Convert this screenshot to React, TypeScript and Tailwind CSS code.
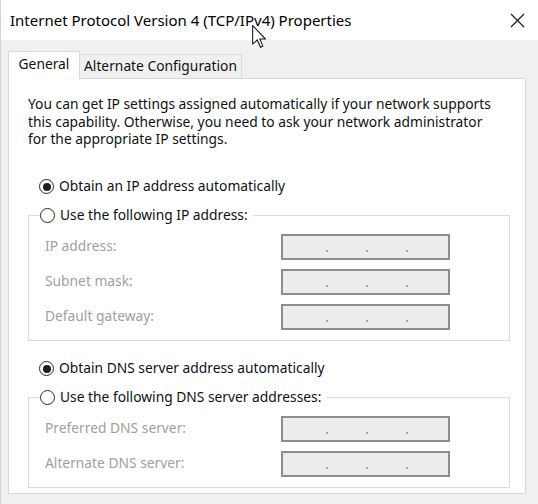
import React from "react";

const Radio = ({ checked }: { checked?: boolean }) => (
  <span className="w-[15px] h-[15px] rounded-full border border-[#2a2a2a] bg-white flex items-center justify-center shrink-0">
    {checked && <span className="w-[8px] h-[8px] rounded-full bg-[#1e1e1e]" />}
  </span>
);

const IpBox = () => (
  <div className="w-[169px] h-[26px] border-2 border-[#8d8d8d] bg-[#ececec] flex items-end pb-[6px] pl-[43px] gap-[38px]">
    <span className="w-[2px] h-[2px] rounded-full bg-[#8c8c8c]" />
    <span className="w-[2px] h-[2px] rounded-full bg-[#8c8c8c]" />
    <span className="w-[2px] h-[2px] rounded-full bg-[#8c8c8c]" />
  </div>
);

const Row = ({ label }: { label: string }) => (
  <div className="flex items-center h-[26px]">
    <span className="w-[236px] text-[#a0a0a0]">{label}</span>
    <IpBox />
  </div>
);

const Group = ({ title, labels }: { title: string; labels: string[] }) => (
  <fieldset className="w-[482px] border border-[#dcdcdc] pb-[10px]">
    <legend className="ml-[11px] pr-[5px] h-[20px] flex items-center gap-[5px]">
      <Radio />
      <span>{title}</span>
    </legend>
    <div className="flex flex-col gap-[9px] mt-[8px] pl-[16px]">
      {labels.map((l) => (
        <Row key={l} label={l} />
      ))}
    </div>
  </fieldset>
);

export default function App() {
  return (
    <div className="relative w-[538px] h-[504px] overflow-hidden bg-[#f0f0f0] text-[13.8px] text-[#111111] font-['Noto_Sans',sans-serif] border-l border-[#d4d4d4]">
      <div className="h-[40px] bg-white flex items-center justify-between pl-[9px] pr-[13px]">
        <span className="text-[15px] text-black">Internet Protocol Version 4 (TCP/IPv4) Properties</span>
        <svg width="15" height="15" viewBox="0 0 15 15">
          <path d="M1 1 L14 14 M14 1 L1 14" stroke="#222" strokeWidth="1.3" />
        </svg>
      </div>

      <div className="pt-[11px] pl-[7px]">
        <div className="flex items-end">
          <div className="relative z-10 -mb-px w-[72px] h-[28px] bg-white border border-b-0 border-[#d9d9d9] flex items-center justify-center pb-[2px]">
            General
          </div>
          <div className="w-[162px] h-[24px] bg-[#f0f0f0] border border-l-0 border-b-0 border-[#d9d9d9] flex items-center justify-center">
            Alternate Configuration
          </div>
        </div>

        <div className="w-[518px] h-[416px] bg-white border border-[#d9d9d9] pt-[16px] pl-[19px]">
          <p className="leading-[17.5px]">
            You can get IP settings assigned automatically if your network supports
            <br />
            this capability. Otherwise, you need to ask your network administrator
            <br />
            for the appropriate IP settings.
          </p>

          <div className="mt-[29px] h-[20px] pl-[11px] flex items-center gap-[5px]">
            <Radio checked />
            <span>Obtain an IP address automatically</span>
          </div>

          <div className="mt-[9px]">
            <Group title="Use the following IP address:" labels={["IP address:", "Subnet mask:", "Default gateway:"]} />
          </div>

          <div className="mt-[18px] h-[20px] pl-[11px] flex items-center gap-[5px]">
            <Radio checked />
            <span>Obtain DNS server address automatically</span>
          </div>

          <div className="mt-[9px]">
            <Group title="Use the following DNS server addresses:" labels={["Preferred DNS server:", "Alternate DNS server:"]} />
          </div>
        </div>
      </div>

      <svg className="absolute left-[251px] top-[25px]" width="14" height="23" viewBox="-0.5 -0.5 12 20">
        <path d="M0 0 L0 16 L4 12.5 L6.8 18.8 L8.8 17.9 L6.2 11.6 L11 11.6 Z" fill="white" stroke="#111" strokeWidth="0.9" strokeLinejoin="miter" />
      </svg>
    </div>
  );
}
